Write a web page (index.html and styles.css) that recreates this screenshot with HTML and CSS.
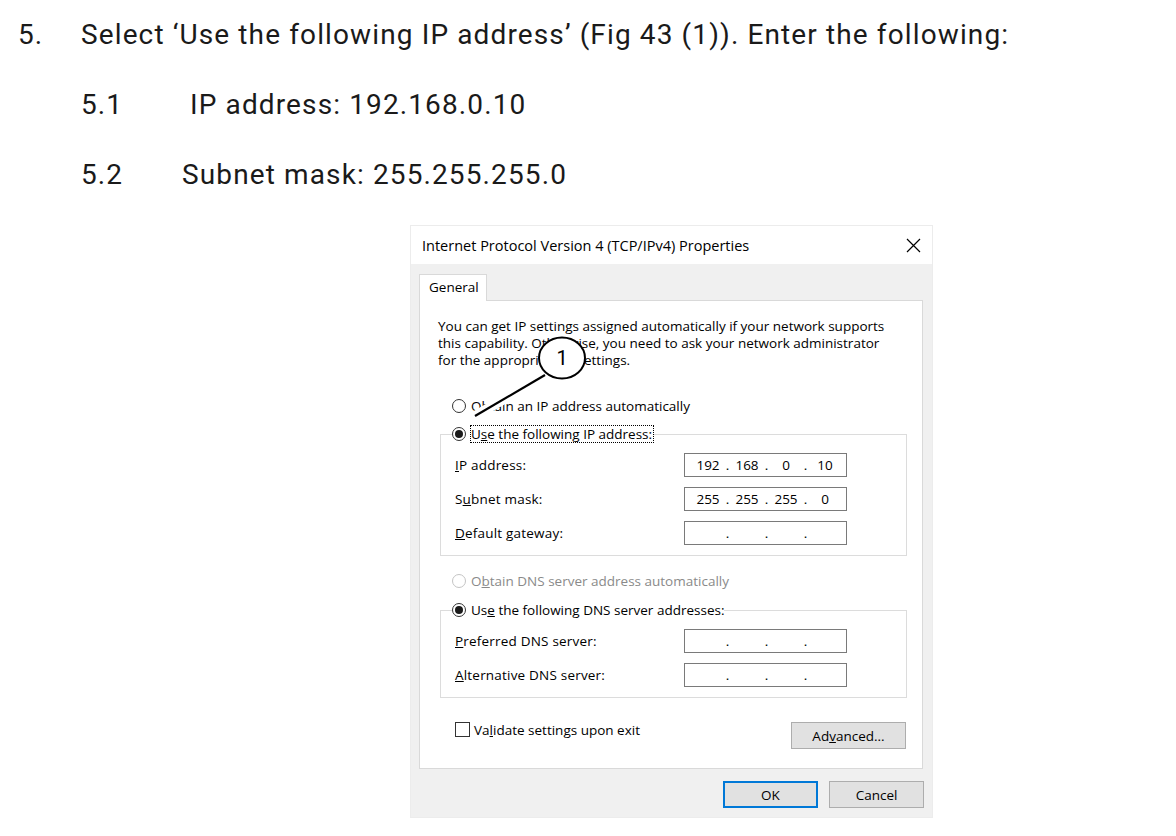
FILE: index.html
```html
<!DOCTYPE html>
<html lang="en">
<head>
    <meta charset="UTF-8">
    <title>TCP/IPv4 Properties</title>
    <link rel="stylesheet" href="styles.css">
</head>
<body>
<div class="steps">
    <div class="step"><span class="num">5.</span><span>Select ‘Use the following IP address’ (Fig 43 (1)). Enter the following:</span></div>
    <div class="sub"><span class="sub-num">5.1</span><span class="shift">IP address: 192.168.0.10</span></div>
    <div class="sub"><span class="sub-num">5.2</span><span>Subnet mask: 255.255.255.0</span></div>
</div>

<div class="dialog">
    <div class="titlebar">
        <span>Internet Protocol Version 4 (TCP/IPv4) Properties</span>
        <svg class="close" width="15" height="15" viewBox="0 0 15 15"><path d="M1 1 L14 14 M14 1 L1 14" stroke="#000" stroke-width="1.2" fill="none"/></svg>
    </div>
    <div class="dlg-body">
        <div class="tabs"><div class="tab">General</div></div>
        <div class="panel">
            <p class="intro">You can get IP settings assigned automatically if your network supports<br>this capability. Otherwise, you need to ask your network administrator<br>for the appropriate IP settings.</p>

            <div class="opt first"><span class="radio"></span><span>Obtain an IP address automatically</span></div>
            <fieldset class="group">
                <legend class="opt"><span class="radio on"></span><span class="focus">U<u>s</u>e the following IP address:</span></legend>
                <div class="rows">
                    <label><u>I</u>P address:</label>
                    <div class="ipbox"><span>192</span><i>.</i><span>168</span><i>.</i><span>0</span><i>.</i><span>10</span></div>
                    <label>S<u>u</u>bnet mask:</label>
                    <div class="ipbox"><span>255</span><i>.</i><span>255</span><i>.</i><span>255</span><i>.</i><span>0</span></div>
                    <label><u>D</u>efault gateway:</label>
                    <div class="ipbox"><span></span><i>.</i><span></span><i>.</i><span></span><i>.</i><span></span></div>
                </div>
            </fieldset>

            <div class="opt dns-auto"><span class="radio off"></span><span>O<u>b</u>tain DNS server address automatically</span></div>
            <fieldset class="group dns">
                <legend class="opt"><span class="radio on"></span><span class="plain">Us<u>e</u> the following DNS server addresses:</span></legend>
                <div class="rows">
                    <label><u>P</u>referred DNS server:</label>
                    <div class="ipbox"><span></span><i>.</i><span></span><i>.</i><span></span><i>.</i><span></span></div>
                    <label><u>A</u>lternative DNS server:</label>
                    <div class="ipbox"><span></span><i>.</i><span></span><i>.</i><span></span><i>.</i><span></span></div>
                </div>
            </fieldset>

            <div class="bottom">
                <div class="check"><span class="box"></span><span>Va<u>l</u>idate settings upon exit</span></div>
                <div class="btn adv">Ad<u>v</u>anced...</div>
            </div>
        </div>
        <div class="actions">
            <div class="btn ok">OK</div>
            <div class="btn">Cancel</div>
        </div>
    </div>

    <!-- callout (1) -->
    <svg class="callout" width="523" height="593" viewBox="0 0 523 593">
        <path d="M135 150 L65 191" stroke="#fff" stroke-width="10" fill="none"/>
        <path d="M135 150 L65 191" stroke="#000" stroke-width="2.2" fill="none"/>
        <ellipse cx="152" cy="133" rx="23" ry="20.5" fill="#fff" stroke="#000" stroke-width="2"/>
        <text x="152" y="140" text-anchor="middle">1</text>
    </svg>
</div>
</body>
</html>
```

FILE: styles.css
```css
*{
    margin: 0;
    padding: 0;
    box-sizing: border-box;
}
body{
    background: #fff;
    font-family: Roboto, "Liberation Sans", sans-serif;
    color: #1a1a1a;
}
.steps{
    padding: 14px 0 0 18px;
    font-size: 28px;
    letter-spacing: 1.12px;
}
.step, .sub{
    display: flex;
    height: 40px;
    align-items: center;
}
.sub{
    margin-top: 30px;
    padding-left: 63px;
}
.num{
    width: 63px;
}
.sub-num{
    width: 101px;
}
.shift{
    padding-left: 8px;
}

/* dialog */
.dialog{
    position: relative;
    width: 523px;
    height: 593px;
    margin: 31px 0 0 410px;
    border: 1px solid #ececec;
    font-family: "Open Sans", "Noto Sans", sans-serif;
    font-size: 13.5px;
    color: #000;
}
.titlebar{
    height: 38px;
    background: #fff;
    display: flex;
    align-items: center;
    justify-content: space-between;
    padding: 0 11px 0 11px;
    font-size: 14.5px;
}
.dlg-body{
    background: #f0f0f0;
    height: 553px;
    padding: 10px 9px 0 8px;
}
.tabs{
    display: flex;
}
.tab{
    position: relative;
    z-index: 1;
    width: 68px;
    height: 27px;
    margin-bottom: -1px;
    padding: 3px 0 0 9px;
    background: #fff;
    border: 1px solid #d9d9d9;
    border-bottom: none;
}
.panel{
    height: 469px;
    background: #fff;
    border: 1px solid #d9d9d9;
    padding: 17px 15px 0 18px;
}
.intro{
    line-height: 17px;
}
.opt{
    display: flex;
    align-items: center;
    height: 18px;
}
.opt.first{
    margin-top: 28px;
    padding-left: 14px;
}
.radio{
    width: 14px;
    height: 14px;
    border: 1px solid #333;
    border-radius: 50%;
    background: #fff;
    margin-right: 5px;
    position: relative;
}
.radio.on::after{
    content: "";
    position: absolute;
    left: 2px;
    top: 2px;
    width: 8px;
    height: 8px;
    border-radius: 50%;
    background: #1a1a1a;
}
.radio.off{
    border-color: #c4c4c4;
}
.focus{
    border: 1px dotted #000;
    line-height: 16px;
    padding: 0 1px 0 0;
    margin-left: -1px;
}
.group{
    margin: 10px 0 0 2px;
    border: 1px solid #dcdcdc;
    padding: 10px 0 10px 14px;
}
.group legend{
    margin-left: -3px;
    padding: 0;
}
.rows{
    display: grid;
    grid-template-columns: 229px 163px;
    grid-auto-rows: 24px;
    row-gap: 10px;
    align-items: center;
}
.rows label{
    letter-spacing: 0.2px;
}
.ipbox{
    height: 24px;
    border: 1px solid #7a7a7a;
    display: flex;
    align-items: center;
    padding-left: 7px;
}
.ipbox span{
    width: 32px;
    text-align: center;
}
.ipbox i{
    font-style: normal;
    width: 7px;
    text-align: center;
}
.dns-auto{
    margin-top: 16px;
    padding-left: 14px;
    color: #8a8a8a;
}
.group.dns{
    margin-top: 11px;
}
.bottom{
    display: flex;
    justify-content: space-between;
    align-items: flex-start;
    margin-top: 23px;
    padding-left: 17px;
}
.check{
    display: flex;
    align-items: center;
    height: 17px;
}
.check .box{
    width: 15px;
    height: 15px;
    border: 1px solid #333;
    margin-right: 4px;
}
.btn{
    height: 27px;
    width: 95px;
    border: 1px solid #adadad;
    background: #e1e1e1;
    display: flex;
    align-items: center;
    justify-content: center;
}
.btn.adv{
    width: 115px;
    margin: 1px 1px 0 0;
}
.btn.ok{
    border: 2px solid #0078d7;
}
.actions{
    display: flex;
    justify-content: flex-end;
    gap: 11px;
    margin-top: 12px;
    margin-right: -1px;
}
.callout{
    position: absolute;
    left: -1px;
    top: -1px;
    pointer-events: none;
}
.callout text{
    font-family: Roboto, "Liberation Sans", sans-serif;
    font-size: 20px;
    fill: #000;
}
```
